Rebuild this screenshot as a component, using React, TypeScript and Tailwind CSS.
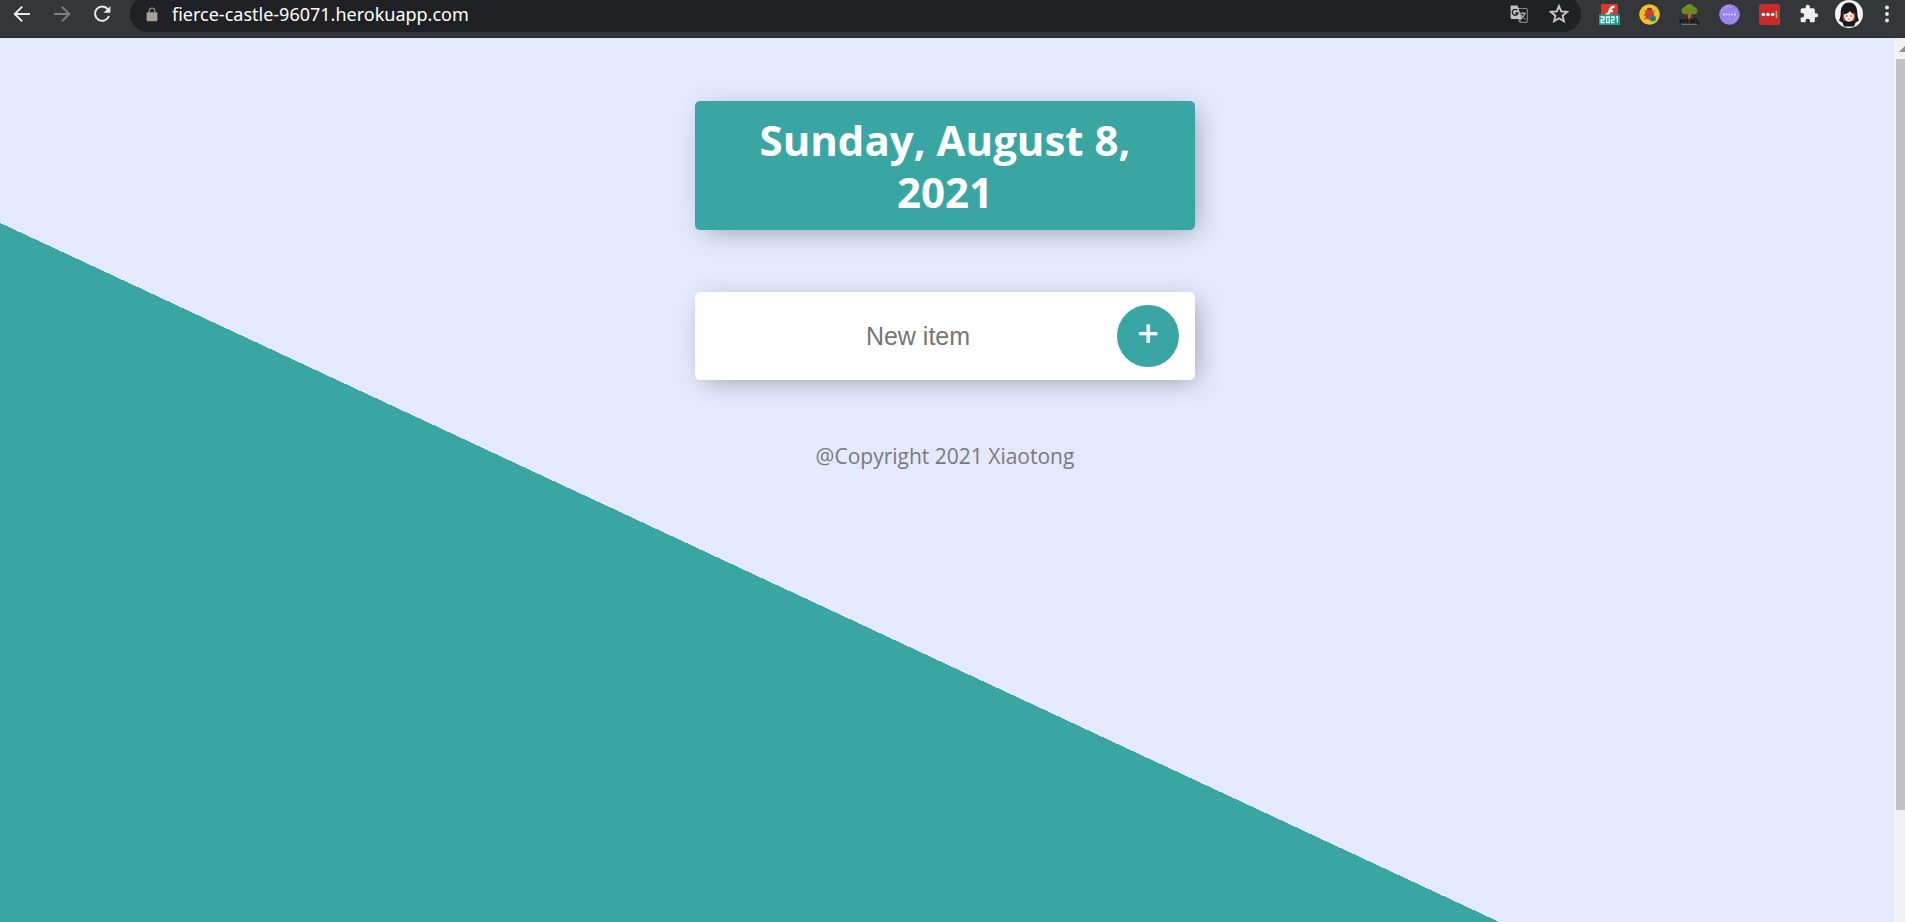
import React from "react";

function BackIcon({ className }: { className: string }) {
  return (
    <svg viewBox="0 0 18 18" className={className} fill="none" stroke="currentColor" strokeWidth="2">
      <path d="M17 9H2.4M9.2 1.6 1.8 9l7.4 7.4" />
    </svg>
  );
}

function ReloadIcon() {
  return (
    <svg viewBox="0 0 18 18" className="size-[18px]" fill="none">
      <path d="M14.9 4.2A7.2 7.2 0 1 0 16 11" stroke="#e8eaed" strokeWidth="2" />
      <path d="M17.4 1v6.8h-6.8z" fill="#e8eaed" />
    </svg>
  );
}

function LockIcon() {
  return (
    <svg viewBox="0 0 12 15" className="h-[15px] w-3 shrink-0" fill="none">
      <path d="M3.2 6V3.9a2.8 2.8 0 0 1 5.6 0V6" stroke="#8b8b90" strokeWidth="1.3" />
      <rect x="0.6" y="5.2" width="10.8" height="9" rx="1" fill="#a5a09c" />
    </svg>
  );
}

function TranslateIcon() {
  return (
    <svg viewBox="0 0 18 18" className="size-[18px]" fill="none">
      <path d="M8 3.5h8.3a1 1 0 0 1 1 1v11.8a1 1 0 0 1-1 1H10z" fill="#202124" stroke="#7d828d" strokeWidth="1.2" />
      <path d="M9.8 8.2h6M12.8 7v1.2M14.8 8.4c-.5 2.4-2.2 4.3-4.2 5.4M11 9.6c.8 1.8 2.4 3.2 4.2 4.4" stroke="#b9bcc2" strokeWidth="1.1" />
      <path d="M1 .5h6.6L12 14H1.8a1.2 1.2 0 0 1-1.2-1.2V1z" fill="#c4c3c0" />
      <path d="m8 14 1.2 3.4L12 14z" fill="#7d828d" />
      <path d="M7.4 5.4A2.9 2.9 0 1 0 8 8H5.2" stroke="#202124" strokeWidth="1.4" />
    </svg>
  );
}

function StarIcon() {
  return (
    <svg viewBox="0 0 20 20" className="size-5" fill="none" stroke="#c9c7c4" strokeWidth="1.9">
      <path d="m10 2 2.2 5.400 5.800.5-4.400 3.800 1.300 5.600-4.900-3-4.900 3 1.300-5.600L2 7.900l5.800-.5z" />
    </svg>
  );
}

function FlashIcon() {
  return (
    <svg viewBox="0 0 21 21" className="size-[21px]">
      <rect x="2" y="0" width="17" height="14" rx="1.5" fill="#d93a2b" />
      <path d="M15.5 1.4c-4 .1-5 2.6-6 5-.7 2-1.3 3.1-3 3.3v2.4c3 0 4.2-1.8 5-3.800h2.3V6h-1.400c.6-1.3 1.3-2.2 3.100-2.3z" fill="#fff" />
      <rect x="0" y="10.5" width="21" height="10.5" fill="#1a9c93" />
      <path
        d="M1.500 13h3.500v2.800H2.200v2.700h3.500M7.500 13h2.800v5.500H7.500zM12 13h3v2.800h-2.500v2.700h3M17 13h1.400v6"
        fill="none"
        stroke="#e9fffb"
        strokeWidth="1.3"
      />
    </svg>
  );
}

function BugIcon() {
  return (
    <svg viewBox="0 0 21 21" className="size-[21px]">
      <circle cx="10.5" cy="10.5" r="10.3" fill="#efc02f" />
      <path d="M5 6.500l2.500 1.500M16 6.500l-2.500 1.500M4.500 11H7M5 15.500l2.500-1.500" stroke="#8a6530" strokeWidth="1" />
      <path d="M7.500 6.800a3 3 0 0 1 6 0z" fill="#7a3a28" />
      <ellipse cx="10.500" cy="10.800" rx="4.600" ry="4.900" fill="#d93c2c" />
      <circle cx="13.800" cy="14.300" r="3.200" fill="#1d8f83" />
      <path d="M12.400 13.500h.9M14.600 13.500h.9M12.600 15.400h2.500" stroke="#0a4d4a" strokeWidth=".9" />
    </svg>
  );
}

function TreeIcon() {
  return (
    <svg viewBox="0 0 21 21" className="size-[21px]">
      <path d="M9.300 9h2.800l.5 7.500H8.800z" fill="#c4662a" />
      <path d="M10.500 0c2.300 0 3.800 1.200 4.400 2.800 2 .4 3.600 2 3.600 4 0 2.200-1.800 3.600-4 3.600-1.400 0-2.400-.4-3.200-1.200h-1.600c-.8.8-1.800 1.200-3.200 1.200-2.200 0-4-1.400-4-3.600 0-2 1.500-3.600 3.500-4C6.700 1.200 8.200 0 10.500 0z" fill="#6c8b22" />
      <path d="M1.500 15v4.500M5 15v4.500M1.500 17.200H5M6.500 15.600h4M8.500 15.600v4M12 19.500v-4l1.800 2.500 1.800-2.500v4M18 15v4h2.500" fill="none" stroke="#17181a" strokeWidth="1.7" />
      <path d="M3 20.300h15" stroke="#8e9096" strokeWidth=".8" />
    </svg>
  );
}

function PurpleIcon() {
  return (
    <svg viewBox="0 0 21 21" className="size-[21px]">
      <circle cx="10.5" cy="10.5" r="10.3" fill="#9b84ea" />
      <path d="M4 10.500h13" stroke="#f3edff" strokeWidth="1.4" strokeDasharray="1.5 1.3" />
      <path d="M3 6.500c1.500-3 4-4.300 7-4.500M16.500 8v5M15 16.500l1.500-1.200M17.500 14l.8-1.500M11 3.500h2" fill="none" stroke="#d4c8fb" strokeWidth=".9" strokeDasharray="1.2 1.2" />
    </svg>
  );
}

function PasswordIcon() {
  return (
    <svg viewBox="0 0 21 21" className="size-[21px]">
      <rect width="21" height="21" rx="2" fill="#c92b28" />
      <circle cx="4.3" cy="10.5" r="1.8" fill="#fff" />
      <circle cx="9" cy="10.5" r="1.8" fill="#fff" />
      <circle cx="13.7" cy="10.5" r="1.8" fill="#fff" />
      <path d="M17.400 7v7" stroke="#c9a08b" strokeWidth="1.5" />
    </svg>
  );
}

function PuzzleIcon() {
  return (
    <svg viewBox="0 0 24 24" className="size-5" fill="#f1f1f1">
      <path d="M20.500 11H19V7c0-1.100-.9-2-2-2h-4V3.500a2.500 2.500 0 0 0-5 0V5H4c-1.100 0-2 .9-2 2v3.800h1.500a2.700 2.700 0 0 1 0 5.400H2V20c0 1.100.9 2 2 2h3.800v-1.500a2.700 2.700 0 0 1 5.400 0V22H17c1.100 0 2-.9 2-2v-4h1.500a2.500 2.500 0 0 0 0-5z" />
    </svg>
  );
}

function AvatarIcon() {
  return (
    <svg viewBox="0 0 28 28" className="size-7">
      <circle cx="14" cy="14" r="14" fill="#f4f4f6" />
      <path d="M14 2.500c5.500 0 8.300 4.500 8.300 10.500 0 3 .7 5 1.700 7.500l-3.500 2.300L19 26.500H9l-1.500-3.700L4 20.500C5 18 5.700 16 5.700 13 5.700 7 8.500 2.500 14 2.500z" fill="#17191d" />
      <path d="M8.200 12.500c-.8 3-.8 6 .4 8.500h2.600v-8zM19.800 12.500c.8 3 .8 6-.4 8.500h-2.600v-8z" fill="#c42f2a" />
      <path d="M14 9.500c3.500 0 5 2.500 5 6s-2.200 6.200-5 6.200-5-2.700-5-6.200 1.500-6 5-6z" fill="#fae7de" />
      <path d="M8.800 14.500c.2-4 2.200-6 5.200-6s5 2 5.200 6c-1.600-.8-3.200-1.800-4.200-3.500-1.400 1.700-3.600 3.100-6.200 3.500z" fill="#17191d" />
      <path d="M10.900 16h1.700M15.400 16h1.700" stroke="#4a2a28" strokeWidth="1.1" />
      <path d="M13.200 19.200h1.600" stroke="#c33b36" strokeWidth=".9" />
    </svg>
  );
}

function MenuIcon() {
  return (
    <svg viewBox="0 0 4 18" className="h-[18px] w-1" fill="#e8eaed">
      <circle cx="2" cy="2.500" r="1.900" />
      <circle cx="2" cy="9" r="1.900" />
      <circle cx="2" cy="15.500" r="1.900" />
    </svg>
  );
}

function BarButton({ label, children }: { label: string; children: React.ReactNode }) {
  return (
    <button type="button" aria-label={label} className="flex h-7 w-10 shrink-0 items-center justify-center">
      {children}
    </button>
  );
}

function BrowserBar() {
  return (
    <header className="flex h-[38px] shrink-0 items-start overflow-hidden border-b border-[#28292c] bg-[#35363a] pl-0.5">
      <BarButton label="Back">
        <BackIcon className="size-[18px] text-[#e8eaed]" />
      </BarButton>
      <BarButton label="Forward">
        <BackIcon className="size-[18px] rotate-180 text-[#7f7f83]" />
      </BarButton>
      <BarButton label="Reload">
        <ReloadIcon />
      </BarButton>
      <div className="-mt-1 mr-2 ml-2 flex h-9 min-w-0 flex-1 items-center rounded-full bg-[#202124] pr-0.5 pl-4">
        <LockIcon />
        <input
          type="text"
          aria-label="Address"
          defaultValue="fierce-castle-96071.herokuapp.com"
          className="ml-3.5 h-7 min-w-0 flex-1 bg-transparent font-['Noto_Sans',sans-serif] text-[18px] text-white outline-none"
        />
        <BarButton label="Translate">
          <TranslateIcon />
        </BarButton>
        <BarButton label="Bookmark">
          <StarIcon />
        </BarButton>
      </div>
      <BarButton label="Flash 2021">
        <FlashIcon />
      </BarButton>
      <BarButton label="Bug finder">
        <BugIcon />
      </BarButton>
      <BarButton label="HTML tree">
        <TreeIcon />
      </BarButton>
      <BarButton label="Code">
        <PurpleIcon />
      </BarButton>
      <BarButton label="Passwords">
        <PasswordIcon />
      </BarButton>
      <BarButton label="Extensions">
        <PuzzleIcon />
      </BarButton>
      <BarButton label="Profile">
        <AvatarIcon />
      </BarButton>
      <button type="button" aria-label="Menu" className="flex h-7 w-9 shrink-0 items-center justify-center">
        <MenuIcon />
      </button>
    </header>
  );
}

function ScrollBar() {
  return (
    <div className="flex w-[11px] shrink-0 flex-col overflow-hidden bg-[#f1f1f1] pl-0.5">
      <svg viewBox="0 0 9 21" className="h-[21px] w-[9px] shrink-0" fill="#8f8f8f">
        <path d="M3 14 9 8v6z" />
      </svg>
      <div className="h-[85%] bg-[#c1c1c1]" />
    </div>
  );
}

export default function App() {
  return (
    <div className="flex h-screen flex-col">
      <BrowserBar />
      <div className="flex min-h-0 flex-1">
        <main className="flex min-w-0 flex-1 flex-col items-center bg-[linear-gradient(205deg,#e4e9fd_968px,#3aa6a4_968px)] pt-[63px] pr-1 font-['Noto_Sans',sans-serif]">
          <div className="flex w-full max-w-[500px] flex-col">
            <div className="rounded-[5px] bg-[#3aa6a4] px-14 pt-[13px] pb-3 text-center shadow-[5px_5px_24px_-5px_rgba(0,0,0,0.35)]">
              <h1 className="font-['Open_Sans',sans-serif] text-[42px] leading-[52px] font-bold text-white">Sunday, August 8, 2021</h1>
            </div>
            <form
              className="mt-[62px] flex h-[88px] items-center rounded-[5px] bg-white pr-4 shadow-[5px_5px_24px_-5px_rgba(0,0,0,0.35)]"
              onSubmit={(e) => e.preventDefault()}
            >
              <input
                type="text"
                aria-label="New item"
                placeholder="New item"
                className="ml-6 h-[60px] min-w-0 flex-1 bg-transparent text-center font-['Liberation_Sans',sans-serif] text-[25px] text-black outline-none placeholder:text-[#757575]"
              />
              <button
                type="submit"
                aria-label="Add item"
                className="size-[62px] shrink-0 rounded-full bg-[#3aa6a4] pb-2 font-['Open_Sans',sans-serif] text-[38px] leading-none font-semibold text-white"
              >
                +
              </button>
            </form>
            <footer className="mt-[60px] text-center font-['Open_Sans',sans-serif] text-[21px] leading-8 text-[#777a80]">
              @Copyright 2021 Xiaotong
            </footer>
          </div>
        </main>
        <ScrollBar />
      </div>
    </div>
  );
}
